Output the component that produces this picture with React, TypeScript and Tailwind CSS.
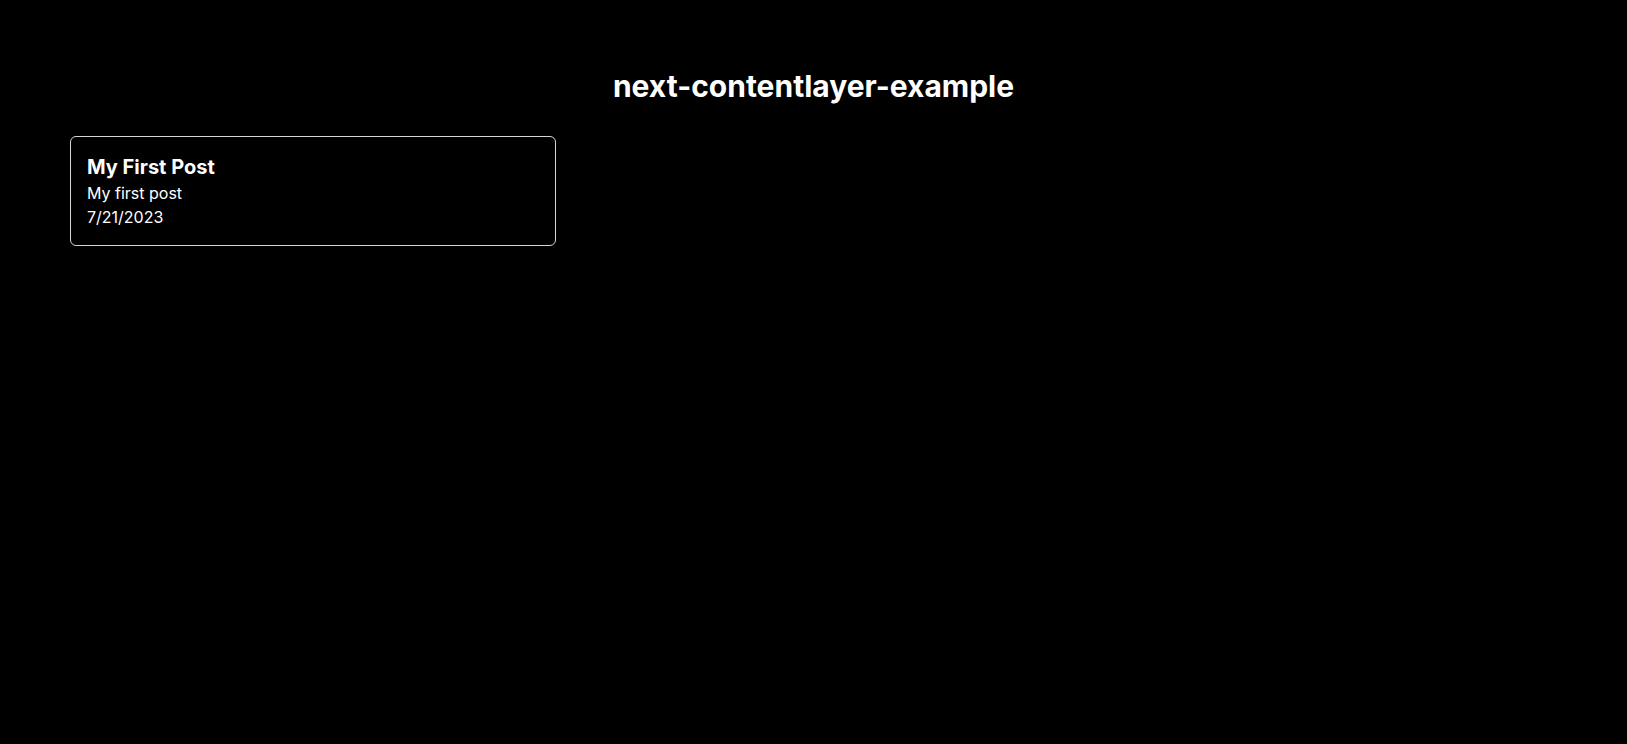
const POSTS = [
  {
    title: 'My First Post',
    description: 'My first post',
    date: '7/21/2023',
  },
]

export default function App() {
  return (
    <main className="min-h-screen bg-black text-white font-['Inter',sans-serif] px-[70px] pt-[68px]">
      <h1 className="text-3xl font-bold text-center mb-8">next-contentlayer-example</h1>

      <div className="grid grid-cols-3 gap-[14px]">
        {POSTS.map((post) => (
          <div key={post.title} className="border border-gray-300 rounded-md p-4">
            <h2 className="text-xl font-bold">{post.title}</h2>
            <p>{post.description}</p>
            <p>{post.date}</p>
          </div>
        ))}
      </div>
    </main>
  )
}
